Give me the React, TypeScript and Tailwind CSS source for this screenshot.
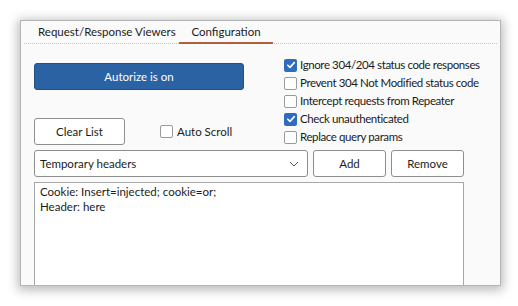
import React from 'react';

const font = { fontFamily: 'Lato, "Open Sans", sans-serif' };

const Check: React.FC<{ on?: boolean }> = ({ on }) =>
  on ? (
    <span className="w-[13px] h-[13px] rounded-[2px] bg-[#2f6cc0] flex items-center justify-center shrink-0">
      <svg width="10" height="10" viewBox="0 0 10 10">
        <path d="M1.8 5.2 L4 7.4 L8.3 2.6" fill="none" stroke="white" strokeWidth="1.6" strokeLinecap="round" strokeLinejoin="round" />
      </svg>
    </span>
  ) : (
    <span className="w-[13px] h-[13px] rounded-[2px] border border-[#9a9a9a] bg-white shrink-0" />
  );

const options = [
  { label: 'Ignore 304/204 status code responses', on: true },
  { label: 'Prevent 304 Not Modified status code', on: false },
  { label: 'Intercept requests from Repeater', on: false },
  { label: 'Check unauthenticated', on: true },
  { label: 'Replace query params', on: false },
];

const App: React.FC = () => {
  return (
    <div className="w-[518px] h-[306px] bg-white pt-[20px] pl-[20px] overflow-hidden" style={font}>
      <div className="w-[481px] h-[266px] bg-[#fafafa] border border-[#b5b5b5] shadow-[0_2px_10px_2px_rgba(0,0,0,0.28)] flex flex-col overflow-hidden text-[11.5px] text-[#1b1b1b]">
        {/* tabs */}
        <div className="h-[23px] mx-[3px] flex items-end border-b border-dotted border-[#c4c4c4] whitespace-nowrap">
          <div className="w-[155px] shrink-0 h-full flex items-center pl-[14px] leading-none">Request/Response Viewers</div>
          <div className="w-[94px] shrink-0 h-full flex items-center justify-center leading-none border-b-2 border-[#b0603a] -mb-[1px]">
            Configuration
          </div>
        </div>

        {/* body */}
        <div className="flex-1 flex flex-col px-[13px] pt-[12px] min-h-0">
          <div className="flex">
            <div className="w-[250px] shrink-0 pt-[7px] flex flex-col">
              <div className="w-[210px] h-[27px] rounded-[3px] bg-[#2b62a3] border border-[#234f86] text-white flex items-center justify-center">
                Autorize is on
              </div>
              <div className="mt-[28px] flex items-center">
                <div className="w-[91px] h-[27px] rounded-[3px] bg-white border border-[#8e8e8e] flex items-center justify-center">
                  Clear List
                </div>
                <div className="ml-[35px] flex items-center gap-[4px] whitespace-nowrap">
                  <Check />
                  <span>Auto Scroll</span>
                </div>
              </div>
            </div>
            <div className="flex flex-col tracking-[-0.4px]">
              {options.map((o) => (
                <div key={o.label} className="h-[18px] flex items-center gap-[3px] whitespace-nowrap">
                  <Check on={o.on} />
                  <span>{o.label}</span>
                </div>
              ))}
            </div>
          </div>

          <div className="mt-[4px] flex gap-[5px]">
            <div className="w-[274px] h-[27px] rounded-[3px] bg-white border border-[#8e8e8e] flex items-center justify-between pl-[5px] pr-[8px]">
              <span>Temporary headers</span>
              <svg width="10" height="6" viewBox="0 0 10 6">
                <path d="M1 1 L5 5 L9 1" fill="none" stroke="#555" strokeWidth="1" />
              </svg>
            </div>
            <div className="w-[73px] h-[27px] rounded-[3px] bg-white border border-[#8e8e8e] flex items-center justify-center">
              Add
            </div>
            <div className="w-[73px] h-[27px] rounded-[3px] bg-white border border-[#8e8e8e] flex items-center justify-center">
              Remove
            </div>
          </div>

          <div className="mt-[5px] w-[430px] flex-1 bg-white border border-[#a8a8a8] border-b-0 px-[5px] pt-[1px] leading-[15px]">
            <div>Cookie: Insert=injected; cookie=or;</div>
            <div>Header: here</div>
          </div>
        </div>
      </div>
    </div>
  );
};

export default App;
